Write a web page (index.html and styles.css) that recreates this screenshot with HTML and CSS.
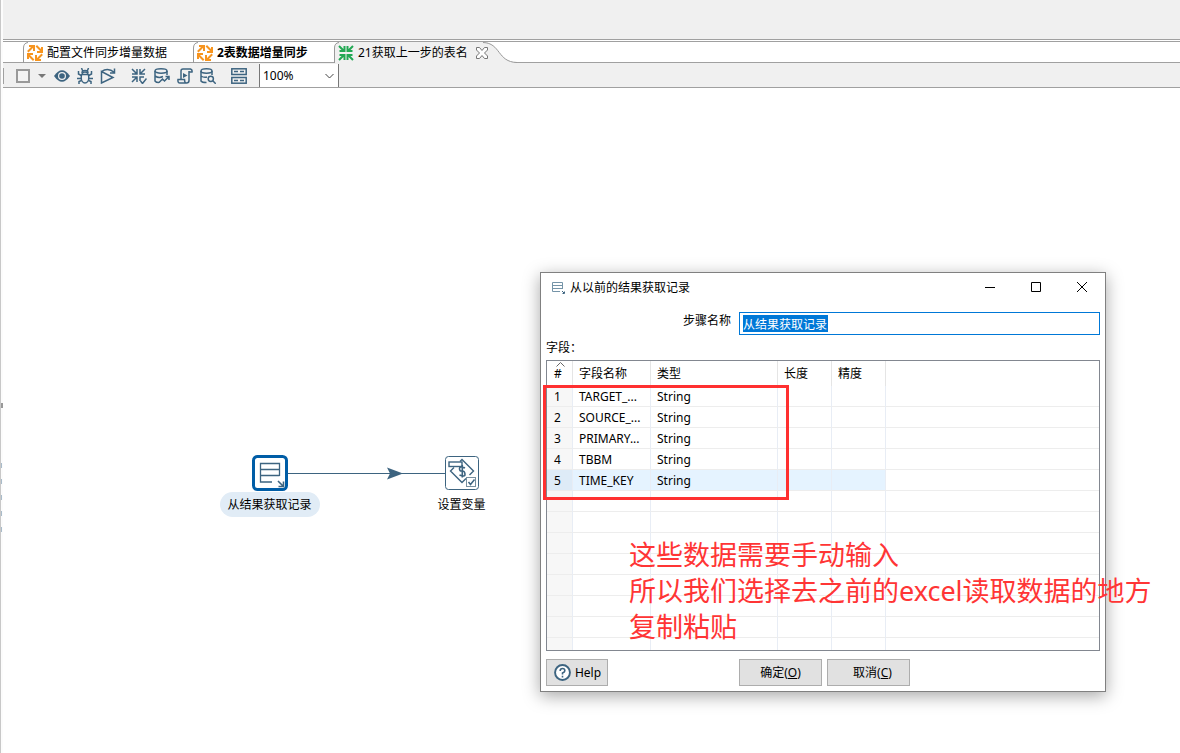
FILE: index.html
```html
<!DOCTYPE html>
<html lang="zh-CN">
<head>
<meta charset="utf-8">
<title>21获取上一步的表名</title>
<link rel="stylesheet" href="styles.css">
</head>
<body>
<svg class="defs" aria-hidden="true">
  <symbol id="arrows-cycle" viewBox="0 0 16 16">
    <g fill="none" stroke="currentColor" stroke-width="2"><path d="M.800 6.700 6 1.500M2 1h5V6"/><path d="M9.300 .800l5.200 5.200M15 2v5H10"/><path d="M15.200 9.300l-5.200 5.200M14 15H9V10"/><path d="M6.700 15.200l-5.200-5.200M1 14V9H6"/></g>
  </symbol>
  <symbol id="arrows-in" viewBox="0 0 16 16">
    <g fill="none" stroke="currentColor" stroke-width="2"><path d="M1 1l5 5M1.500 6H6.500V1"/><path d="M15 1l-5 5M9.500 1v5h5"/><path d="M1 15l5-5M1.500 10h5v5"/><path d="M15 15l-5-5M14.500 10h-5v5"/></g>
  </symbol>
  <symbol id="rows" viewBox="0 0 13 13">
    <path d="M10.500 8V1.500h-10v9H8M.500 4.500h10M.500 7.500h10" fill="none" stroke="currentColor"/>
    <path d="M10 10l2 2M12.500 10.500v2H10.500" fill="none" stroke="#3d6480"/>
  </symbol>
</svg>
<div class="app">
  <div class="edge" aria-hidden="true"><i></i><i></i><i></i><i></i><i></i><i></i></div>
  <div class="main">
    <div class="ribbon"></div>
    <nav class="tabs">
      <button class="tab tab-first"><svg class="tab-edge" viewBox="0 0 6 21"><path d="M.500 21V6Q.500 1 5 .500"/></svg><svg class="icon orange"><use href="#arrows-cycle"/></svg><span>配置文件同步增量数据</span></button>
      <button class="tab tab-second"><svg class="tab-edge" viewBox="0 0 6 21"><path d="M.500 21V6Q.500 1 5 .500"/></svg><svg class="icon orange"><use href="#arrows-cycle"/></svg><span>2表数据增量同步</span></button>
      <button class="tab tab-active"><svg class="tab-edge" viewBox="0 0 6 21"><path d="M.500 21V6Q.500 1 5 .500"/></svg><svg class="icon green"><use href="#arrows-in"/></svg><span>21获取上一步的表名</span><svg class="close" viewBox="0 0 12 12"><path d="M.500 .500h3L6 3.500l2.500-3h3v2.500L8.500 6l3 3v2.500h-3L6 8.500l-2.500 3h-3V9l3-3-3-3z" fill="#fff" stroke="#777"/></svg></button>
      <svg class="curve" viewBox="0 0 34 21"><path d="M0 0C18 1 14 20 34 20.500V21H0z" fill="#f0f0f0"/><path d="M0 .500C18 1 14 20 34 20.500" fill="none" stroke="#999"/></svg>
      <div class="tab-rest"></div>
    </nav>
    <div class="toolbar">
      <span class="grip"></span>
      <button class="tool stop" aria-label="停止"><svg class="icon" viewBox="0 0 16 16"><rect x="2" y="2" width="12" height="12" fill="#f4f4f4" stroke="#999" stroke-width="2"/></svg></button>
      <button class="tool drop" aria-label="更多"><svg viewBox="0 0 8 4"><path d="M0 0h8L4 4z" fill="#777"/></svg></button>
      <button class="tool" aria-label="预览"><svg class="icon" viewBox="0 0 16 16"><path d="M0 8Q8-3.500 16 8 8 19.500 0 8z" fill="#3d6480"/><circle cx="8" cy="8" r="4" fill="#f0f0f0"/><circle cx="8" cy="8" r="2.800" fill="#3d6480"/></svg></button>
      <button class="tool" aria-label="调试"><svg class="icon line" viewBox="0 0 16 16"><ellipse cx="8" cy="9.500" rx="3.800" ry="5.500"/><path d="M4.500 6.500h7M5 5Q5 2.500 8 2.500T11 5M5.500 2.500 4.500 0M10.500 2.500l1-2.500M4.300 7.500 1.500 6V3M11.700 7.500l2.800-1.500V3M4 10.500H0M12 10.500h4M4.500 12.500 2 13.500V16M11.500 12.500l2.500 1V16"/></svg></button>
      <button class="tool" aria-label="重放"><svg class="icon line" viewBox="0 0 16 16"><path d="M1.500 3.500v11.500L13 9.500zM1.500 3.500Q8-1 14.500 4.500M14.500 .500v4.500H10"/></svg></button>
      <button class="tool gap" aria-label="验证"><svg class="icon line" viewBox="0 0 16 16"><path d="M1 1l4.500 4.500M1 6h5V1M14 1 9.500 5.500M9 1v5h5M1 14l4.500-4.500M1 9h5v5M9 13V9h4M9.500 13l2 2.500 4-5"/></svg></button>
      <button class="tool" aria-label="影响分析"><svg class="icon line" viewBox="0 0 16 16"><ellipse cx="7" cy="3" rx="6" ry="2.200"/><path d="M1 3v10q1 1.500 4 1.500M13 3v4M1 8q4 2.500 8 .500M5 14.500l3.500-3.500 2 2 4.500-4.500M11.500 8.500h3.500V12"/></svg></button>
      <button class="tool" aria-label="SQL"><svg class="icon line" viewBox="0 0 16 16"><path d="M4 11V3Q4 1 6 1h7.500q2 .500 1.500 3h-3M12 3v9.500q0 2.500-2.500 2.500H3Q.500 15 1 11.500h6.500q0 3.500 2 3.500"/><path class="solid" d="M6 5l4.500 2.500L6 10z"/></svg></button>
      <button class="tool" aria-label="浏览数据库"><svg class="icon line" viewBox="0 0 16 16"><ellipse cx="6.500" cy="3" rx="5.500" ry="2.200"/><path d="M1 3v10q1 1.500 5.500 1.500M12 3v4M1 8q3 2 6 1"/><circle cx="10.800" cy="10.800" r="2.600"/><path d="M12.800 12.800l3 3"/></svg></button>
      <button class="tool gap" aria-label="显示结果"><svg class="icon line" viewBox="0 0 16 16"><rect x=".8" y=".8" width="14.400" height="5.700"/><rect x=".8" y="9.500" width="14.400" height="5.700"/><path d="M3 3.600h4M9 3.600h4M3 12.400h4M9 12.400h4"/></svg></button>
      <div class="zoom"><select aria-label="缩放"><option>100%</option></select><svg viewBox="0 0 9 6"><path d="M.500 1l4 4 4-4" fill="none" stroke="#444"/></svg></div>
    </div>
    <main class="canvas">
      <svg class="hop" viewBox="0 0 158 14"><path d="M0 6.500h158" stroke="#3d6480"/><path d="M100 .500l16 6-16 6 3-6z" fill="#3d6480"/></svg>
      <div class="node node-source"><svg class="node-box" viewBox="0 0 36 36"><rect x="1.500" y="1.500" width="33" height="33" rx="4" fill="#fff" stroke="#005da6" stroke-width="3"/><path d="M27.500 21V8.500h-19v18.500H20M8.500 14.500h19M8.500 20.500h19" fill="none" stroke="#3d6480" stroke-width="1.300"/><path d="M26 26l5 5M31.500 26.500v5h-5" fill="none" stroke="#3d6480" stroke-width="1.600"/></svg><span class="node-name">从结果获取记录</span></div>
      <div class="node node-target"><svg class="node-box" viewBox="0 0 36 36"><rect x="1.500" y="1.500" width="33" height="33" rx="3" fill="#fff" stroke="#3d6480"/><g fill="none" stroke="#3d6480" stroke-width="1.400"><path d="M10 12.500 6.500 16 18 27.500l4-4M16 6.500l2-2L29.500 16l-4 4"/><rect x="5" y="7" width="13" height="4.500" fill="#fff"/></g><path d="M21 13Q15.500 10.500 15.500 13.500T18 16t3 3-5.500 1M18.300 10v12.500" fill="none" stroke="#3d6480" stroke-width="1.600"/><rect x="22.500" y="22.500" width="9" height="9" fill="#fff" stroke="#7890a0"/><path d="M24.500 27l2 2.500 4-5" fill="none" stroke="#3d6480" stroke-width="1.500"/></svg><span class="node-name">设置变量</span></div>
    </main>
  </div>
</div>

<section class="dialog" role="dialog" aria-label="从以前的结果获取记录">
  <header class="titlebar">
    <svg class="title-icon"><use href="#rows"/></svg>
    <span class="title">从以前的结果获取记录</span>
    <button class="win" aria-label="最小化"><svg viewBox="0 0 12 12"><path d="M1 6.500h10"/></svg></button>
    <button class="win" aria-label="最大化"><svg viewBox="0 0 12 12"><path d="M1.500 1.500h9v9h-9z"/></svg></button>
    <button class="win" aria-label="关闭"><svg viewBox="0 0 12 12"><path d="M1 1l10 10M11 1L1 11"/></svg></button>
  </header>
  <div class="step">
    <label for="step">步骤名称</label>
    <div class="field"><input id="step" value="从结果获取记录"></div>
  </div>
  <div class="caption">字段：</div>
  <div class="grid">
    <table>
      <colgroup><col class="c-num"><col class="c-name"><col class="c-type"><col class="c-len"><col class="c-len"><col></colgroup>
      <thead><tr><th class="sorted">#<svg viewBox="0 0 9 5"><path d="M.500 4.500l4-4 4 4" fill="none" stroke="#666"/></svg></th><th>字段名称</th><th>类型</th><th>长度</th><th>精度</th><th></th></tr></thead>
      <tbody>
        <tr><td>1</td><td>TARGET_...</td><td>String</td><td></td><td></td><td></td></tr>
        <tr><td>2</td><td>SOURCE_...</td><td>String</td><td></td><td></td><td></td></tr>
        <tr><td>3</td><td>PRIMARY...</td><td>String</td><td></td><td></td><td></td></tr>
        <tr><td>4</td><td>TBBM</td><td>String</td><td></td><td></td><td></td></tr>
        <tr class="selected"><td>5</td><td>TIME_KEY</td><td>String</td><td></td><td></td><td></td></tr>
        <tr><td></td><td></td><td></td><td></td><td></td><td></td></tr>
        <tr><td></td><td></td><td></td><td></td><td></td><td></td></tr>
        <tr><td></td><td></td><td></td><td></td><td></td><td></td></tr>
        <tr><td></td><td></td><td></td><td></td><td></td><td></td></tr>
        <tr><td></td><td></td><td></td><td></td><td></td><td></td></tr>
        <tr><td></td><td></td><td></td><td></td><td></td><td></td></tr>
        <tr><td></td><td></td><td></td><td></td><td></td><td></td></tr>
        <tr><td></td><td></td><td></td><td></td><td></td><td></td></tr>
      </tbody>
    </table>
  </div>
  <footer class="actions">
    <button class="btn help"><svg viewBox="0 0 16 16"><circle cx="8" cy="8" r="7" fill="#fff" stroke="#3d6480" stroke-width="1.800"/><path d="M5.800 6.500Q5.800 4.300 8 4.300t2.200 2Q10.200 7.500 8 8.500v1.300M8 11v1.700" fill="none" stroke="#3d6480" stroke-width="1.500"/></svg>Help</button>
    <span class="pair"><button class="btn">确定(<u>O</u>)</button><button class="btn cancel">取消(<u>C</u>)</button></span>
  </footer>
  <div class="marker"></div>
  <p class="note">这些数据需要手动输入<br>所以我们选择去之前的excel读取数据的地方<br>复制粘贴</p>
</section>
</body>
</html>
```
FILE: styles.css
```css
* { box-sizing: border-box; }
body {
  margin: 0;
  overflow: hidden;
  background: #fff;
  color: #000;
  font: 12px/16px "Noto Sans", "Noto Sans CJK SC", sans-serif;
}
button, input, select { font: inherit; color: inherit; }
button { border: 0; padding: 0; background: none; }
svg { display: block; flex: none; }
.defs { position: absolute; width: 0; height: 0; }

.app { display: flex; min-height: 100vh; }
.edge {
  display: flex;
  flex-direction: column;
  gap: 11px;
  width: 3px;
  padding-top: 403px;
  background: #fcfcfc;
  border-left: 1px solid #c8c8c8;
}
.edge i { width: 1px; height: 5px; background: #a9bccb; }
.edge i:first-child { width: 2px; margin-bottom: 44px; background: #999; }
.main { flex: 1; display: flex; flex-direction: column; min-width: 0; }
.ribbon { height: 40px; background: #f0f0f0; border-bottom: 1px solid #a0a0a0; }

.tabs {
  display: flex;
  height: 22px;
  margin-top: 1px;
  padding-left: 20px;
  border-top: 1px solid #a0a0a0;
  background: linear-gradient(#a0a0a0, #a0a0a0) bottom / 100% 1px no-repeat #fff;
}
.tab { display: flex; align-items: center; gap: 4px; padding-top: 1px; white-space: nowrap; }
.tab-edge { width: 6px; height: 21px; align-self: flex-start; margin: -1px -6px 0 0; }
.tab-edge path { fill: none; stroke: #999; }
.icon { width: 16px; height: 16px; }
.tab-first { width: 170px; }
.tab-second { width: 141px; font-weight: bold; }
.tab-active { background: #f0f0f0; border-top-left-radius: 6px; }
.green { color: #22a853; }
.orange { color: #f7941e; }
.close { position: relative; z-index: 1; width: 12px; height: 12px; margin-left: 4px; }
.curve { width: 34px; height: 21px; margin-left: -5px; }
.tab-rest { flex: 1; }

.toolbar {
  display: flex;
  align-items: center;
  gap: 7px;
  height: 25px;
  padding-top: 1px;
  background: #f0f0f0;
  border-bottom: 1px solid #a0a0a0;
}
.grip { width: 1px; height: 16px; background: #a0a0a0; }
.stop { margin-left: 4px; }
.drop { padding-right: 1px; }
.drop svg { width: 8px; height: 4px; }
.gap { margin-left: 8px; }
.line { fill: none; stroke: #3d6480; stroke-width: 1.5; }
.solid { fill: #3d6480; stroke: none; }
.zoom {
  display: flex;
  align-items: center;
  align-self: stretch;
  width: 80px;
  margin-left: 5px;
  padding-right: 4px;
  background: #fff;
  border: solid #777;
  border-width: 0 1px;
}
.zoom select { flex: 1; min-width: 0; height: 22px; padding: 0 0 0 3px; border: 0; appearance: none; background: none; outline: 0; }
.zoom svg { width: 9px; height: 6px; }

.canvas { position: relative; flex: 1; background: #fff; }
.hop { position: absolute; left: 284px; top: 379px; width: 158px; height: 14px; }
.node { position: absolute; display: flex; flex-direction: column; align-items: center; gap: 1px; width: 100px; }
.node-source { left: 217px; top: 367px; }
.node-target { left: 409px; top: 367px; }
.node-box { width: 36px; height: 36px; }
.node-name { padding: 5px 8px 4px 7px; border-radius: 13px; white-space: nowrap; }
.node-source .node-name { background: #e1ecf6; }

.dialog {
  position: absolute;
  left: 540px;
  top: 272px;
  width: 566px;
  padding: 0 5px 5px;
  background: #fff;
  border: 1px solid #808080;
  box-shadow: 0 4px 16px rgba(0, 0, 0, .35);
}
.titlebar { display: flex; align-items: center; height: 28px; padding-left: 6px; }
.title-icon { width: 13px; height: 13px; margin-right: 5px; color: #7594a8; }
.title { flex: 1; padding-top: 1px; }
.win { display: flex; justify-content: center; width: 46px; }
.win svg { width: 12px; height: 12px; fill: none; stroke: #000; }
.win:last-child { margin-right: -5px; }
.step { display: flex; gap: 8px; margin-top: 11px; }
.step label { width: 185px; padding-top: 1px; text-align: right; }
.field { flex: 1; height: 23px; border: 1px solid #0078d7; padding: 2px 3px; display: flex; }
.field input { width: 85px; height: 17px; padding: 0; border: 0; outline: 0; background: #0078d7; color: #fff; }
.caption { margin: 5px 0 4px; }
.grid { height: 291px; overflow: hidden; border: 1px solid #828790; }
table { width: 100%; table-layout: fixed; border-collapse: separate; border-spacing: 0; }
.c-num { width: 26px; }
.c-name { width: 78px; }
.c-type { width: 127px; }
.c-len { width: 54px; }
th { position: relative; height: 25px; padding: 0 6px; border-right: 1px solid #e5e5e5; font-weight: normal; text-align: left; }
th:last-child { border-right: 0; }
.sorted svg { position: absolute; left: 9px; top: 1px; width: 9px; height: 5px; }
td { height: 21px; padding: 1px 6px 0; border-right: 1px solid #e8edf5; border-bottom: 1px solid #ededed; white-space: nowrap; }
th:first-child, td:first-child { padding-left: 7px; }
td:first-child { background: #f7f7f7; }
td:last-child { border-right: 0; }
.selected td { background: #e5f3ff; }
.selected td:first-child { background: #deebf7; }
.selected td:last-child { background: #fff; }
.actions { display: flex; align-items: center; margin-top: 8px; }
.btn { display: flex; align-items: center; justify-content: center; width: 83px; height: 27px; background: #e1e1e1; border: 1px solid #adadad; }
.help { width: 62px; gap: 4px; padding-left: 1px; }
.help svg { width: 17px; height: 17px; }
.pair { display: flex; gap: 5px; margin-left: 131px; }
.cancel { padding-left: 8px; }
.marker { position: absolute; left: 2px; top: 112px; width: 246px; height: 115px; border: 3px solid #ff3030; }
.note { position: absolute; left: 88px; top: 264px; margin: 0; color: #ff3535; font-size: 27px; line-height: 36px; white-space: nowrap; }
```
